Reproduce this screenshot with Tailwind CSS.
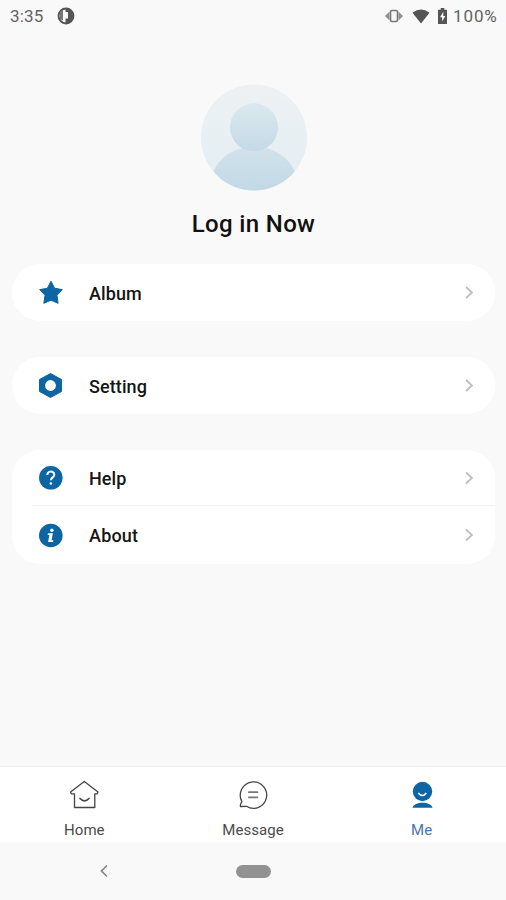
<!DOCTYPE html>
<html lang="en">
<head>
<meta charset="utf-8">
<title>Me</title>
<script src="https://cdn.jsdelivr.net/npm/@tailwindcss/browser@4"></script>
</head>
<body class="bg-[#f9f9f9]">
<div class="flex h-[900px] w-[506px] flex-col overflow-hidden bg-[#f9f9f9] font-['Roboto',sans-serif]">
  <header class="flex h-8 shrink-0 items-center justify-between pr-[8px] pl-[10px] text-[#636363]">
    <div class="flex items-center gap-[13px]">
      <span class="w-[34px] whitespace-nowrap text-[17px] leading-8 tracking-[0.2px]">3:35</span>
      <svg class="size-[18px]" viewBox="0 0 18 18"><circle cx="9" cy="9" r="7.400" fill="#fafafa" stroke="#555" stroke-width="2"/><path d="M8.500 2h1a7 7 0 0 1 5.500 10.500L12 16H8.500v-4.500h2.500V5H8.500z" fill="#555"/><path d="M3 4.500 6 3v10.500L3 12z" fill="#777"/></svg>
    </div>
    <div class="flex items-center">
      <svg class="mr-[9px] h-[14px] w-[18px]" viewBox="0 0 18 14"><rect x="5.500" y="1.500" width="7" height="11" rx="1.500" fill="none" stroke="#777" stroke-width="1.600"/><path d="M4.500 2.500v9L0 7zM13.500 2.500v9L18 7z" fill="#909090"/></svg>
      <svg class="mr-[8px] h-[15px] w-[18px]" viewBox="0 0 17 15"><path d="M0 3.800Q8.500-2.600 17 3.800L8.500 14.500z" fill="#555"/></svg>
      <svg class="mr-[6px] h-[16px] w-[9px]" viewBox="0 0 9 16"><path d="M2.700 0h3.600v1.800H9V16H0V1.800h2.700z" fill="#555"/><path d="M5.300 3.700 2 9.300h2.100v4.200L7.300 8H5.300z" fill="#fafafa"/></svg>
      <span class="w-[45px] whitespace-nowrap text-[17px] leading-8 tracking-[0.9px]">100%</span>
    </div>
  </header>

  <main class="flex flex-1 flex-col items-center pt-[52px] pr-[11px] pl-[12px]">
    <svg class="size-[108px]" viewBox="0 0 108 108">
      <defs>
        <linearGradient id="bg" x1="0" y1="0" x2="0" y2="1"><stop offset="0" stop-color="#edf1f3"/><stop offset="1" stop-color="#e3eef4"/></linearGradient>
        <linearGradient id="head" x1="0" y1="0" x2="0" y2="1"><stop offset="0" stop-color="#dce8ee"/><stop offset="1" stop-color="#c4dae7"/></linearGradient>
        <linearGradient id="body" x1="0" y1="0" x2="0" y2="1"><stop offset="0" stop-color="#d2e2eb"/><stop offset="1" stop-color="#c0d8e5"/></linearGradient>
        <clipPath id="disc"><circle cx="54" cy="53.500" r="53"/></clipPath>
      </defs>
      <circle cx="54" cy="53.500" r="53" fill="url(#bg)"/>
      <path clip-path="url(#disc)" d="M10 96C16 76 30 63 54 63s38 13 44 33v14H10z" fill="url(#body)"/>
      <circle cx="54" cy="43.300" r="24" fill="url(#head)"/>
    </svg>
    <h1 class="mt-[16px] text-[24px] leading-[33px] font-medium tracking-[0.350px] text-[#111]">Log in Now</h1>

    <section class="mt-[23px] flex h-[57px] w-full items-center rounded-[28px] bg-white pr-[21px] pl-[25px]">
      <svg class="size-[27px]" viewBox="0 0 27 27"><path d="m14 2.300 3.700 7 7.600 1.300-5.300 5.700 1.100 8-7.100-3.100-7.200 3.100 1.200-8-5.300-5.700 7.600-1.300z" fill="#0d65a3" stroke="#0d65a3" stroke-linejoin="round"/></svg>
      <span class="ml-[25px] flex-1 pt-px text-[18px] font-medium tracking-[0.100px] text-[#151515]">Album</span>
      <svg class="h-[14px] w-[10px]" viewBox="0 0 10 14"><path d="m2 1 6 5.500L2 12" fill="none" stroke="#bdbdbd" stroke-width="1.700"/></svg>
    </section>

    <section class="mt-[36px] flex h-[57px] w-full items-center rounded-[28px] bg-white pr-[21px] pl-[25px]">
      <svg class="size-[27px]" viewBox="0 0 27 27"><path d="M13.500 1.500 24.500 7.500v12L13.500 25.500 2.500 19.500v-12z" fill="#0d65a3" stroke="#0d65a3" stroke-linejoin="round"/><circle cx="13.500" cy="13.500" r="5.400" fill="#fff"/></svg>
      <span class="ml-[25px] flex-1 pt-px text-[18px] font-medium tracking-[0.100px] text-[#151515]">Setting</span>
      <svg class="h-[14px] w-[10px]" viewBox="0 0 10 14"><path d="m2 1 6 5.500L2 12" fill="none" stroke="#bdbdbd" stroke-width="1.700"/></svg>
    </section>

    <section class="mt-[36px] w-full rounded-[28px] bg-white">
      <div class="flex h-[55px] items-center pr-[21px] pl-[25px]">
        <svg class="size-[27px]" viewBox="0 0 27 27"><circle cx="13.800" cy="13.800" r="11.800" fill="#0d65a3"/><path d="M10.300 11c0-4.500 7-4.400 7-.3 0 2.700-3.400 2.700-3.400 5.600" fill="none" stroke="#fff" stroke-width="2"/><circle cx="13.900" cy="19.500" r="1.300" fill="#fff"/></svg>
        <span class="ml-[25px] flex-1 pt-[2px] text-[18px] font-medium tracking-[0.100px] text-[#151515]">Help</span>
        <svg class="h-[14px] w-[10px]" viewBox="0 0 10 14"><path d="m2 1.500 6 5.500-6 5.500" fill="none" stroke="#bdbdbd" stroke-width="1.700"/></svg>
      </div>
      <div class="ml-[20px] h-px bg-[#f1f1f1]"></div>
      <div class="flex h-[58px] items-center pr-[21px] pl-[25px]">
        <svg class="size-[27px]" viewBox="0 0 27 27"><circle cx="13.800" cy="13.500" r="11.800" fill="#0d65a3"/><circle cx="14.900" cy="8.300" r="1.700" fill="#fff"/><path d="M11 11.300h4.900l-1.300 7h1.700l-.3 1.800h-4.900l1.300-7h-1.800z" fill="#fff"/></svg>
        <span class="ml-[25px] flex-1 text-[18px] font-medium tracking-[0.200px] text-[#151515]">About</span>
        <svg class="h-[14px] w-[10px]" viewBox="0 0 10 14"><path d="m2 1.500 6 5.500-6 5.500" fill="none" stroke="#bdbdbd" stroke-width="1.700"/></svg>
      </div>
    </section>
  </main>

  <nav class="grid h-[76px] shrink-0 grid-cols-3 border-t border-[#eee] bg-white text-[15px] leading-5 text-[#4b4b4b]">
    <div class="flex flex-col items-center pt-[12px]">
      <svg class="size-8" viewBox="0 0 32 32" fill="none" stroke="#444" stroke-width="1.300" stroke-linejoin="round" stroke-linecap="round"><path d="M16.300 2.500 30 13l-.8 1.800H26.800v13.700H6.500V14.800H3.300L2.500 13z"/><path d="M12 19.500q4.500 4.500 9 0" stroke-width="1.700"/></svg>
      <span class="mt-[9px] tracking-[0.050px]">Home</span>
    </div>
    <div class="flex flex-col items-center pt-[12px]">
      <svg class="size-8" viewBox="0 0 32 32" fill="none" stroke="#444" stroke-width="1.300" stroke-linejoin="round" stroke-linecap="round"><path d="M4.900 22.500A13.200 13.200 0 1 1 9.400 27.300L3.600 27.500q-1-1 1.300-5z"/><path d="M11.800 13.200h8.700M11.800 18.300h8.700" stroke="#777" stroke-width="1.700"/></svg>
      <span class="mt-[9px] tracking-[0.050px]">Message</span>
    </div>
    <div class="flex flex-col items-center pt-[12px] text-[#4676b0]">
      <svg class="size-8" viewBox="0 0 32 32"><circle cx="16.500" cy="12.500" r="9.700" fill="#0d65a3"/><path d="M6.500 28.700c1.500-6.600 18.500-6.600 20 0z" fill="#0d65a3"/><path d="M12.300 14q4 5 8 0" fill="none" stroke="#fff" stroke-width="1.700"/></svg>
      <span class="mt-[9px] tracking-[0.050px]">Me</span>
    </div>
  </nav>

  <footer class="grid h-[58px] shrink-0 grid-cols-[208px_90px_208px] items-center justify-items-center">
    <svg class="h-[14px] w-[10px]" viewBox="0 0 10 14"><path d="M8 1.500 2.500 7 8 12.500" fill="none" stroke="#858585" stroke-width="1.700"/></svg>
    <div class="h-[13px] w-[35px] rounded-full bg-[#929292]"></div>
  </footer>
</div>
</body>
</html>
